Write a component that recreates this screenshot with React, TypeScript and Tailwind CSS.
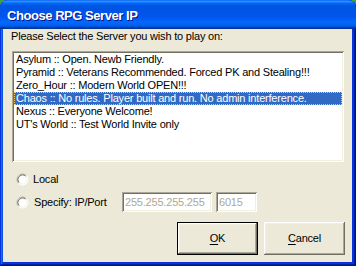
import React from "react";

const items = [
  "Asylum :: Open. Newb Friendly.",
  "Pyramid :: Veterans Recommended. Forced PK and Stealing!!!",
  "Zero_Hour :: Modern World OPEN!!!",
  "Chaos :: No rules. Player built and run. No admin interference.",
  "Nexus :: Everyone Welcome!",
  "UT's World :: Test World Invite only",
];

function Radio() {
  return (
    <svg width="13" height="13" viewBox="0 0 13 13" className="shrink-0">
      <circle cx="6.5" cy="6.5" r="5.5" fill="#ffffff" />
      <path d="M2.61 10.39 A5.5 5.5 0 0 1 10.39 2.61" fill="none" stroke="#aca899" strokeWidth="1" />
      <path d="M3.32 9.68 A4.5 4.5 0 0 1 9.68 3.32" fill="none" stroke="#716f64" strokeWidth="1" />
      <path d="M10.39 2.61 A5.5 5.5 0 0 1 2.61 10.39" fill="none" stroke="#ffffff" strokeWidth="1" />
      <path d="M9.68 3.32 A4.5 4.5 0 0 1 3.32 9.68" fill="none" stroke="#f1efe2" strokeWidth="1" />
    </svg>
  );
}

export default function App() {
  return (
    <div className="w-[356px] h-[266px] bg-[#41a33a] font-['Liberation_Sans',Arial,sans-serif] text-[11px] tracking-[-0.2px] text-black">
      <div className="flex h-full flex-col overflow-hidden rounded-t-[8px] bg-[#0831d9] shadow-[inset_-1px_-1px_#00138c,inset_1px_1px_#0831d9,inset_-2px_-2px_#001ea0,inset_2px_2px_#166aee,inset_-3px_-3px_#003bda,inset_3px_3px_#0855dd]">
        <div className="flex h-[29px] shrink-0 items-center pl-[7px] pt-[1px] bg-[linear-gradient(180deg,#0058ee_0%,#3593ff_4%,#288eff_6%,#127dff_8%,#036ffc_10%,#0262ee_14%,#0057e5_20%,#0054e3_24%,#0055eb_56%,#005bf5_66%,#026afe_76%,#0062ef_86%,#0052d6_92%,#0040ab_94%,#003092_100%)]">
          <span className="text-[13px] font-bold leading-none tracking-[-0.45px] text-white text-shadow-[1px_1px_#0f1089]">
            Choose RPG Server IP
          </span>
        </div>
        <div className="flex-1 pl-[3px] pr-[4px] pb-[4px]">
          <div className="flex h-full flex-col bg-[#ece9d8]">
            <div className="ml-[8px] mt-[1px] h-[13px] leading-[13px]">
              Please Select the Server you wish to play on:
            </div>
            <div className="ml-[9px] mt-[8px] h-[111px] w-[332px] bg-white p-[2px] shadow-[inset_1px_1px_#aca899,inset_-1px_-1px_#ffffff,inset_2px_2px_#716f64,inset_-2px_-2px_#f1efe2]">
              {items.map((t, i) =>
                i === 3 ? (
                  <div
                    key={i}
                    className="h-[13px] whitespace-nowrap border border-dotted border-[#f3c86a] bg-[#316ac5] pl-[1px] leading-[11px] text-white"
                  >
                    {t}
                  </div>
                ) : (
                  <div key={i} className="h-[13px] whitespace-nowrap pl-[2px] leading-[13px]">
                    {t}
                  </div>
                )
              )}
            </div>
            <div className="ml-[13px] mt-[10px] flex h-[14px] items-center gap-[4px]">
              <Radio />
              <span className="leading-[13px]">Local</span>
            </div>
            <div className="ml-[13px] mt-[6px] flex h-[20px] items-center">
              <Radio />
              <span className="ml-[5px] w-[88px] leading-[13px]">Specify: IP/Port</span>
              <div className="flex h-[20px] w-[90px] items-center bg-white pl-[3px] text-[#aca899] shadow-[inset_1px_1px_#aca899,inset_-1px_-1px_#ffffff,inset_2px_2px_#716f64,inset_-2px_-2px_#f1efe2]">
                255.255.255.255
              </div>
              <div className="ml-[4px] flex h-[20px] w-[41px] items-center bg-white pl-[3px] text-[#aca899] shadow-[inset_1px_1px_#aca899,inset_-1px_-1px_#ffffff,inset_2px_2px_#716f64,inset_-2px_-2px_#f1efe2]">
                6015
              </div>
            </div>
            <div className="mr-[7px] mt-[10px] flex justify-end gap-[6px]">
              <div className="flex h-[33px] w-[81px] items-center justify-center border border-black bg-[#ece9d8] shadow-[inset_-1px_-1px_#716f64,inset_1px_1px_#ffffff,inset_-2px_-2px_#aca899,inset_2px_2px_#f1efe2]">
                <span>
                  <span className="underline underline-offset-[2px]">O</span>K
                </span>
              </div>
              <div className="flex h-[33px] w-[81px] items-center justify-center bg-[#ece9d8] shadow-[inset_-1px_-1px_#716f64,inset_1px_1px_#ffffff,inset_-2px_-2px_#aca899,inset_2px_2px_#f1efe2]">
                <span>
                  <span className="underline underline-offset-[2px]">C</span>ancel
                </span>
              </div>
            </div>
          </div>
        </div>
      </div>
    </div>
  );
}
